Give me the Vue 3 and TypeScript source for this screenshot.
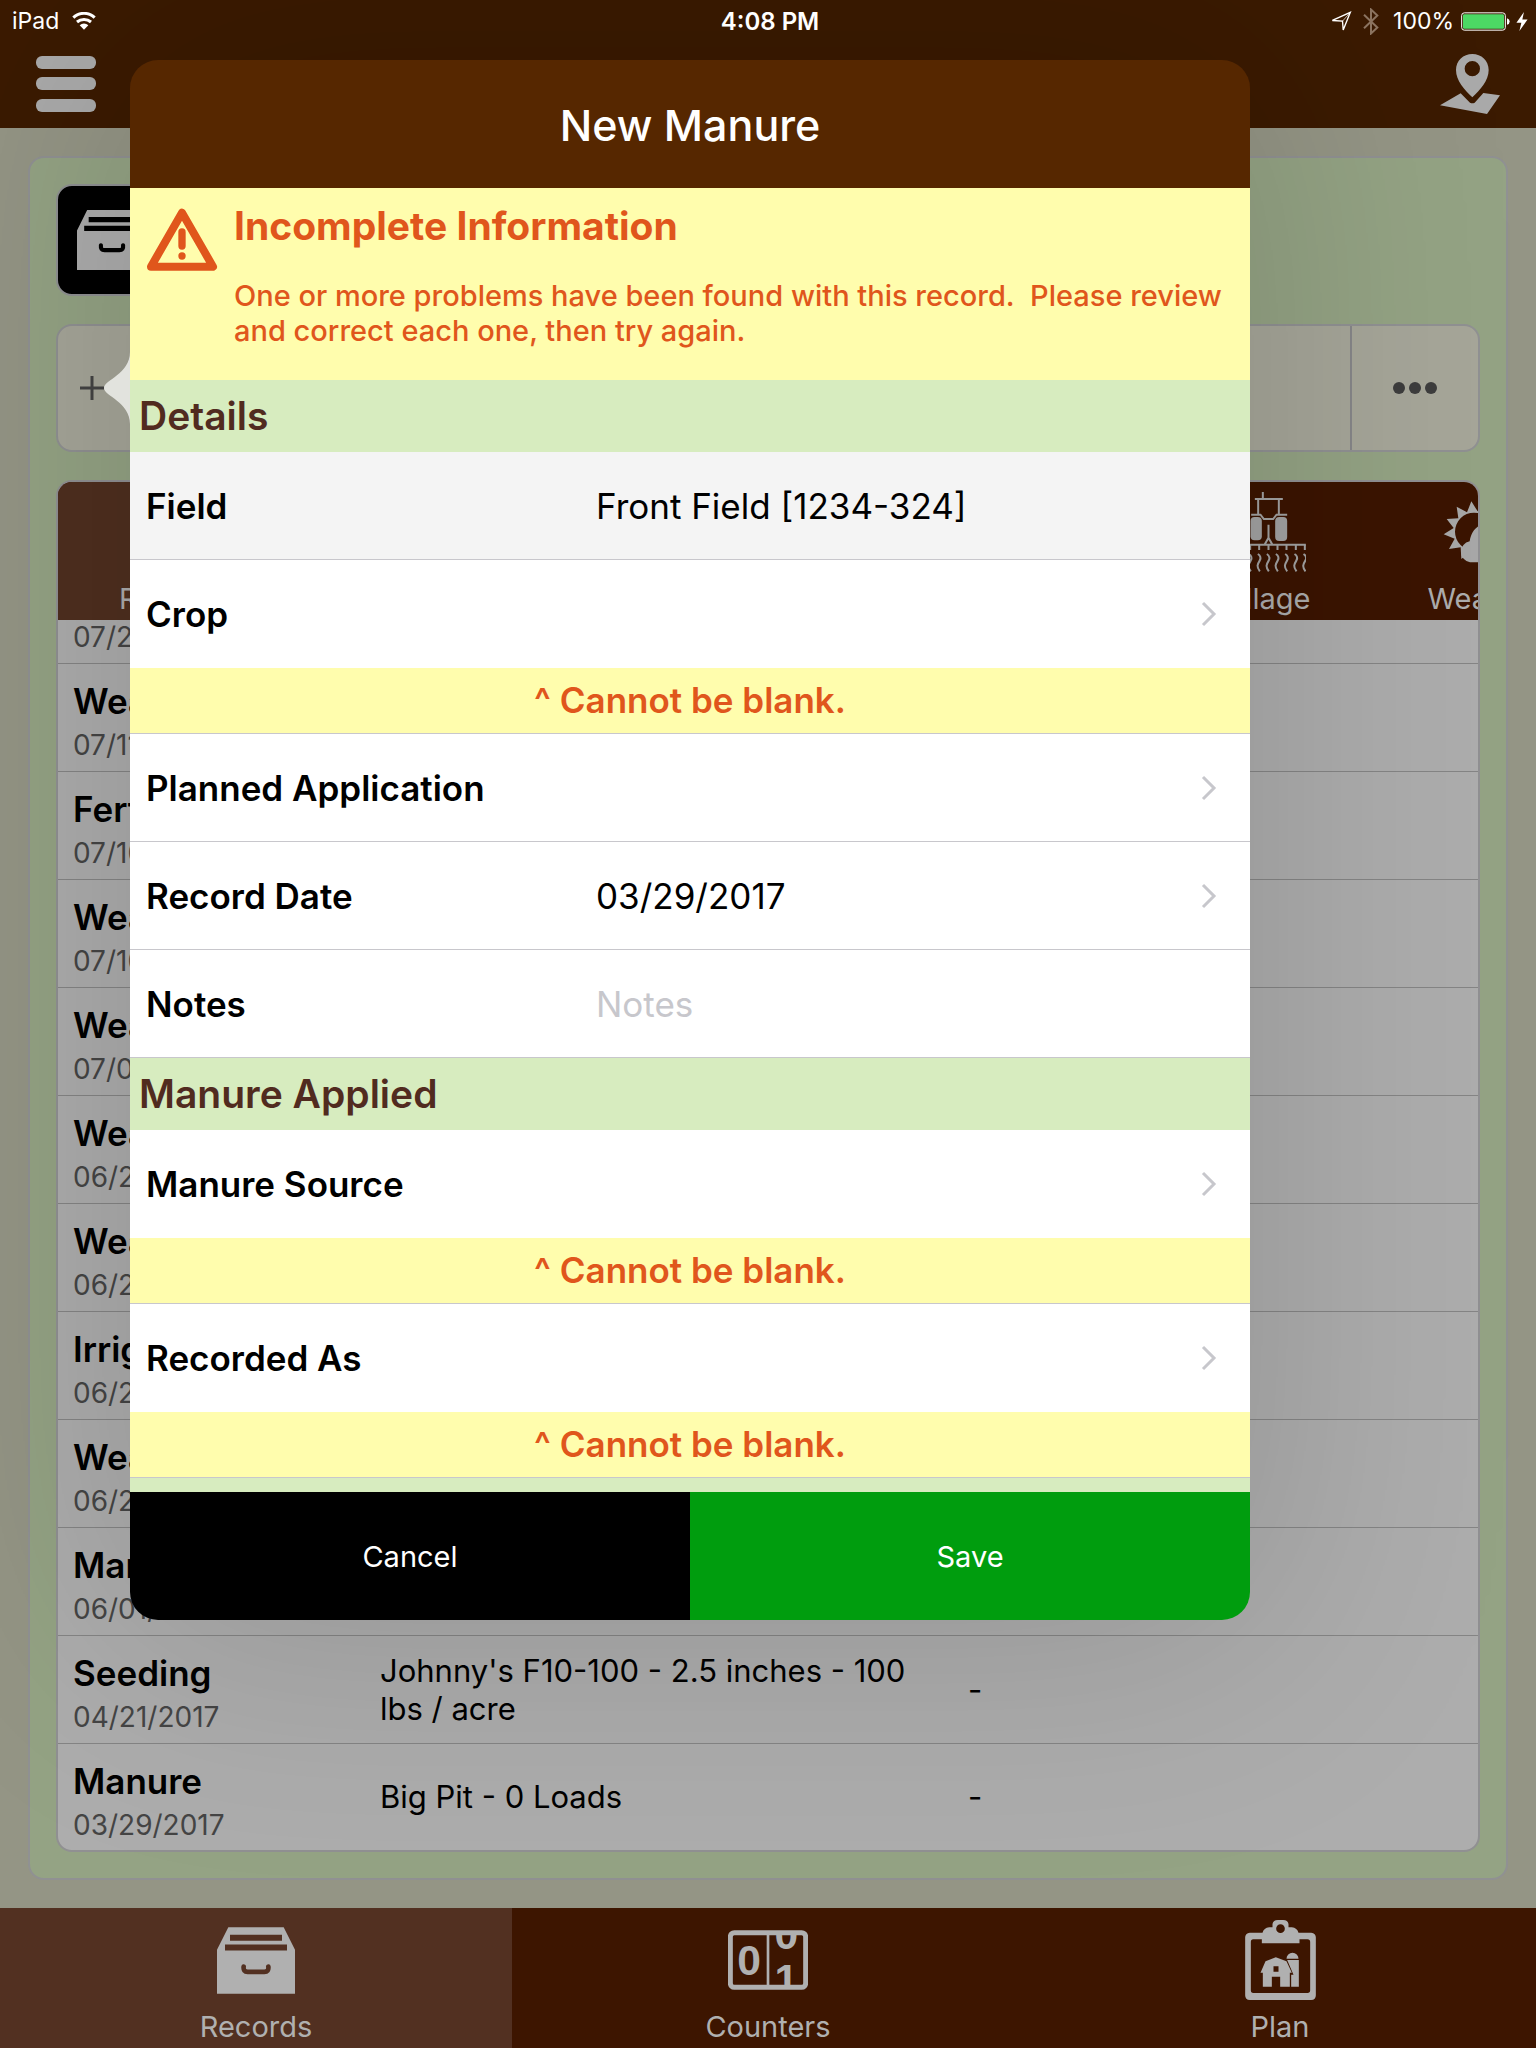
<script setup lang="ts">
import { ref } from 'vue'

interface FarmRecord {
  kind: string
  date: string
  summary?: string
  amount?: string
}

interface FormRow {
  id: string
  label: string
  type: 'readonly' | 'picker' | 'text'
  value: string
  error?: string
}

interface FormSection {
  title: string
  rows: FormRow[]
}

const categories = ['Recent', 'Fertilizer', 'Irrigation', 'Manure', 'Seeding', 'Tillage', 'Weather']

const records: FarmRecord[] = [
  { kind: 'Weather', date: '07/21/2017' },
  { kind: 'Weather', date: '07/11/2017' },
  { kind: 'Fertilizer', date: '07/10/2017' },
  { kind: 'Weather', date: '07/10/2017' },
  { kind: 'Weather', date: '07/03/2017' },
  { kind: 'Weather', date: '06/29/2017' },
  { kind: 'Weather', date: '06/26/2017' },
  { kind: 'Irrigation', date: '06/23/2017' },
  { kind: 'Weather', date: '06/20/2017' },
  { kind: 'Manure', date: '06/01/2017' },
  { kind: 'Seeding', date: '04/21/2017', summary: "Johnny's F10-100 - 2.5 inches - 100 lbs / acre", amount: '-' },
  { kind: 'Manure', date: '03/29/2017', summary: 'Big Pit - 0 Loads', amount: '-' },
]

const blank = '^ Cannot be blank.'

const sections = ref<FormSection[]>([
  {
    title: 'Details',
    rows: [
      { id: 'field', label: 'Field', type: 'readonly', value: 'Front Field [1234-324]' },
      { id: 'crop', label: 'Crop', type: 'picker', value: '', error: blank },
      { id: 'planned', label: 'Planned Application', type: 'picker', value: '' },
      { id: 'date', label: 'Record Date', type: 'picker', value: '03/29/2017' },
      { id: 'notes', label: 'Notes', type: 'text', value: '' },
    ],
  },
  {
    title: 'Manure Applied',
    rows: [
      { id: 'source', label: 'Manure Source', type: 'picker', value: '', error: blank },
      { id: 'recorded', label: 'Recorded As', type: 'picker', value: '', error: blank },
    ],
  },
])

// Twelve-pointed star for the sun's rays
const sunRays = Array.from({ length: 24 }, (_, i) => {
  const angle = ((i * 15 - 95) * Math.PI) / 180
  const radius = i % 2 === 0 ? 91 : 62
  return `${Math.round(92 + radius * Math.cos(angle))} ${Math.round(92 + radius * Math.sin(angle))}`
}).join('L')
</script>

<template>
  <div class="app">
    <header class="top">
      <div class="status">
        <div class="status-left">
          <span>iPad</span>
          <svg class="wifi" viewBox="0 0 72 54" aria-hidden="true">
            <path d="M4 17A46 46 0 0 1 68 17" fill="none" stroke="#fff" stroke-width="9" />
            <path d="M15 30A32 32 0 0 1 57 30" fill="none" stroke="#fff" stroke-width="9" />
            <path d="M36 53L23 40A19 19 0 0 1 49 40Z" fill="#fff" />
          </svg>
        </div>
        <span class="clock">4:08 PM</span>
        <div class="status-right">
          <svg class="locate" viewBox="0 0 62 62" aria-hidden="true">
            <path d="M4 28L57 4L36 56L34 30Z" fill="none" stroke="#fff" stroke-width="4" />
            <path d="M34 30L57 4" stroke="#fff" stroke-width="2" />
          </svg>
          <svg class="bluetooth" viewBox="0 0 48 80" aria-hidden="true">
            <path d="M3 20L43 58L24 76V4L43 22L3 60" fill="none" stroke="#8b735f" stroke-width="6" />
          </svg>
          <span>100%</span>
          <svg class="battery" viewBox="0 0 147 56" aria-hidden="true">
            <rect x="2" y="2" width="131" height="52" rx="8" fill="none" stroke="#fff" stroke-width="3" />
            <rect x="6" y="6" width="123" height="44" rx="4" fill="#4cd964" />
            <path d="M138 18Q146 20 146 28T138 38Z" fill="#fff" />
          </svg>
          <svg class="bolt" viewBox="0 0 36 58" aria-hidden="true">
            <path d="M24 0L1 33H16L10 58L35 23H19Z" fill="#fff" />
          </svg>
        </div>
      </div>
      <div class="nav">
        <button class="icon-button" aria-label="Menu">
          <svg class="menu" viewBox="0 0 60 56">
            <rect width="60" height="13" rx="6" />
            <rect y="21" width="60" height="13" rx="6" />
            <rect y="43" width="60" height="13" rx="6" />
          </svg>
        </button>
        <button class="icon-button" aria-label="Map">
          <svg class="map" viewBox="0 0 180 180">
            <path
              fill-rule="evenodd"
              d="M97 0C70 0 48 20 48 48C48 80 74 108 97 130C120 108 146 80 146 48C146 20 124 0 97 0ZM97 21A23 23 0 1 1 97 67A23 23 0 1 1 97 21Z"
            />
            <path d="M0 154L62 118L90 146Q97 150 104 146L130 117L180 124L141 180Z" />
          </svg>
        </button>
      </div>
    </header>

    <main class="content">
      <section class="panel">
        <button class="tile" aria-label="Records">
          <svg class="drawer" viewBox="0 0 234 200">
            <path
              fill-rule="evenodd"
              d="M34 0H200L234 68V200H0V68ZM39 23V41H195V23ZM24 52V70H210V52Z"
            />
            <path d="M80 118Q78 134 92 134H142Q156 134 154 118" fill="none" stroke="#000" stroke-width="14" stroke-linecap="round" />
          </svg>
        </button>

        <div class="toolbar">
          <button class="tool add" aria-label="Add record">
            <svg viewBox="0 0 24 24"><path d="M0 12H24M12 0V24" stroke="#444" stroke-width="3" /></svg>
          </button>
          <span class="tool-space"></span>
          <button class="tool more" aria-label="More">
            <svg viewBox="0 0 44 12" fill="#3d3d3d">
              <circle cx="6" cy="6" r="6" /><circle cx="22" cy="6" r="6" /><circle cx="38" cy="6" r="6" />
            </svg>
          </button>
        </div>

        <div class="card">
          <nav class="categories">
            <button v-for="(name, i) in categories" :key="name" class="category" :class="{ chosen: i === 0 }">
              <span class="category-icon">
                <svg v-if="name === 'Tillage'" class="tillage" viewBox="-18 0 242 246" fill="none" stroke="#a3a3a3" stroke-width="6">
                  <path d="M95 3V24M71 24H155M81 24V70M143 24V70M60 71H88L98 84H126L136 71H168" />
                  <rect x="58" y="78" width="34" height="70" rx="12" fill="#a3a3a3" stroke="none" />
                  <rect x="132" y="78" width="36" height="72" rx="12" fill="#a3a3a3" stroke="none" />
                  <path d="M112 101V140L101 160M112 140L123 160M0 161H224" />
                  <path d="M3 161V177M30 161V177M57 161V177M84 161V177M112 161V177M139 161V177M166 161V177M194 161V177M221 161V177" />
                  <path
                    v-for="x in [3, 30, 57, 84, 111, 138, 166, 194, 221]"
                    :key="x"
                    :transform="`translate(${x} 0)`"
                    d="M-4 189C4 194 6 200 2 208C-5 220 -9 226 2 241"
                  />
                </svg>
                <svg v-if="name === 'Weather'" class="weather" viewBox="0 0 250 186" fill="#a8a8a8">
                  <path fill-rule="evenodd" :d="`M${sunRays}ZM92 35A57 57 0 1 0 92 149A57 57 0 1 0 92 35Z`" />
                  <path
                    d="M79 121C85 82 112 66 140 66C175 66 196 90 198 118C230 116 248 132 248 152C248 172 232 184 214 184H80A32 32 0 0 1 79 121Z"
                  />
                </svg>
              </span>
              <span>{{ name }}</span>
            </button>
          </nav>
          <div class="records">
            <table>
              <tbody>
                <tr v-for="(r, i) in records" :key="i">
                  <td class="what">
                    <strong>{{ r.kind }}</strong>
                    <time>{{ r.date }}</time>
                  </td>
                  <td class="summary"><p>{{ r.summary }}</p></td>
                  <td class="amount">{{ r.amount }}</td>
                </tr>
              </tbody>
            </table>
          </div>
        </div>
      </section>
    </main>

    <nav class="tabs">
      <a href="#records" class="tab chosen">
        <span class="tab-icon">
          <svg width="78" height="67" viewBox="0 0 234 200">
            <path
              fill-rule="evenodd"
              d="M34 0H200L234 68V200H0V68ZM39 23V41H195V23ZM24 52V70H210V52Z"
            />
            <path d="M80 118Q78 134 92 134H142Q156 134 154 118" fill="none" stroke="#523021" stroke-width="14" stroke-linecap="round" />
          </svg>
        </span>
        Records
      </a>
      <a href="#counters" class="tab">
        <span class="tab-icon">
          <svg width="80" height="60" viewBox="0 0 240 178">
            <clipPath id="reel"><rect x="125" y="14" width="98" height="150" /></clipPath>
            <rect x="7" y="7" width="226" height="164" rx="12" fill="none" stroke="#b0b0b0" stroke-width="15" />
            <path d="M120 10V170" stroke="#b0b0b0" stroke-width="8" />
            <g font-family="Liberation Sans, sans-serif" font-weight="700" font-size="128" text-anchor="middle">
              <text x="63" y="134">0</text>
              <g clip-path="url(#reel)">
                <text x="175" y="56">0</text>
                <text x="175" y="190">1</text>
              </g>
            </g>
          </svg>
        </span>
        Counters
      </a>
      <a href="#plan" class="tab">
        <span class="tab-icon">
          <svg width="71" height="80" viewBox="0 0 212 240">
            <path
              fill-rule="evenodd"
              d="M14 38H52Q56 24 72 22H82V12Q84 0 98 0H114Q128 0 130 12V22H140Q156 24 160 38H198Q212 40 212 52V226Q212 240 198 240H14Q0 240 0 226V52Q0 40 14 38ZM50 58H24Q17 58 17 66V211Q17 219 24 219H187Q195 219 195 211V66Q195 58 187 58H163V70H50ZM106 13A13 13 0 1 0 106 39A13 13 0 1 0 106 13Z"
            />
            <path
              fill-rule="evenodd"
              d="M61 124L92 112L124 124L140 158H134V200H105V170H80V200H53V158H46ZM85 139V155H100V139Z"
            />
            <path d="M124 116A18 18 0 0 1 160 116ZM126 120H161V200H138V164H145Z" />
          </svg>
        </span>
        Plan
      </a>
    </nav>

    <div class="dialog" role="dialog" aria-labelledby="dialog-title">
      <svg class="pointer" viewBox="0 0 26 72" aria-hidden="true">
        <path d="M26 0C26 22 0 28 0 36C0 44 26 50 26 72Z" fill="#e2e3de" />
      </svg>
      <form class="sheet" @submit.prevent>
        <h1 id="dialog-title">New Manure</h1>
        <div class="body">
          <div class="alert" role="alert">
            <svg class="warning" viewBox="0 0 212 192" aria-hidden="true">
              <path d="M106 14L199 176H13Z" fill="none" stroke="#e0561c" stroke-width="24" stroke-linejoin="round" />
              <path d="M106 72V114" stroke="#e0561c" stroke-width="22" stroke-linecap="round" />
              <circle cx="106" cy="144" r="11" fill="#e0561c" />
            </svg>
            <div>
              <h2>Incomplete Information</h2>
              <p>One or more problems have been found with this record.&nbsp; Please review and correct each one, then try again.</p>
            </div>
          </div>
          <template v-for="s in sections" :key="s.title">
            <h3>{{ s.title }}</h3>
            <template v-for="row in s.rows" :key="row.id">
              <div class="row" :class="{ locked: row.type === 'readonly', invalid: row.error }">
                <label :for="row.id">{{ row.label }}</label>
                <button v-if="row.type === 'picker'" :id="row.id" type="button" class="control">
                  <span>{{ row.value }}</span>
                  <svg class="chevron" viewBox="0 0 16 26" aria-hidden="true">
                    <path d="M2 2L13 13L2 24" fill="none" stroke="#c7c7cc" stroke-width="3" />
                  </svg>
                </button>
                <input
                  v-else
                  :id="row.id"
                  v-model="row.value"
                  type="text"
                  class="control"
                  :readonly="row.type === 'readonly'"
                  :placeholder="row.label"
                />
              </div>
              <p v-if="row.error" class="error">{{ row.error }}</p>
            </template>
          </template>
          <div class="next-section"></div>
        </div>
        <footer>
          <button type="button" class="cancel">Cancel</button>
          <button type="submit" class="save">Save</button>
        </footer>
      </form>
    </div>
  </div>
</template>

<style>
body {
  margin: 0;
}
</style>

<style scoped>
* {
  box-sizing: border-box;
}
h1,
h2,
h3,
p {
  margin: 0;
}
button,
input {
  border: 0;
  padding: 0;
  background: none;
  color: inherit;
  font: inherit;
}
svg {
  display: block;
  flex: none;
}
.app {
  position: relative;
  display: flex;
  flex-direction: column;
  height: 100vh;
  overflow: hidden;
  background: #949585;
  font-family: Inter, 'Liberation Sans', sans-serif;
}
.top {
  flex: none;
  height: 128px;
  background: #3b1a00;
}
.status {
  position: relative;
  z-index: 2;
  display: grid;
  grid-template-columns: 1fr auto 1fr;
  align-items: center;
  height: 42px;
  padding: 0 8px 0 12px;
  color: #fff;
  font-size: 23px;
}
.status-left,
.status-right {
  display: flex;
  align-items: center;
}
.status-left {
  gap: 13px;
}
.status-right {
  justify-content: flex-end;
}
.clock {
  font-size: 24px;
  font-weight: 600;
}
.wifi {
  width: 24px;
  height: 18px;
}
.locate {
  width: 21px;
  height: 21px;
  margin-right: 11px;
}
.bluetooth {
  width: 16px;
  height: 27px;
  margin-right: 14px;
}
.battery {
  width: 49px;
  height: 19px;
  margin: 0 6px 0 7px;
}
.bolt {
  width: 12px;
  height: 19px;
}
.nav {
  display: flex;
  justify-content: space-between;
  align-items: center;
  height: 86px;
  padding: 0 36px 2px;
}
.icon-button {
  fill: #aaa;
}
.menu {
  width: 60px;
  height: 56px;
}
.map {
  width: 60px;
  height: 60px;
}
.content {
  flex: 1;
  display: flex;
  min-height: 0;
  padding: 28px;
}
.panel {
  flex: 1;
  display: flex;
  flex-direction: column;
  gap: 28px;
  min-width: 0;
  padding: 26px;
  border: 2px solid #909192;
  border-radius: 16px;
  background: #94a384;
}
.tile {
  flex: none;
  display: grid;
  place-items: center;
  width: 112px;
  height: 112px;
  border: 2px solid #8f9092;
  border-radius: 16px;
  background: #000;
  fill: #adadad;
}
.drawer {
  width: 70px;
  height: 60px;
}
.toolbar {
  flex: none;
  display: flex;
  height: 128px;
  border: 2px solid #909192;
  border-radius: 16px;
  background: #a6a699;
}
.tool {
  display: grid;
  place-items: center;
}
.add {
  width: 68px;
}
.add svg {
  width: 24px;
  height: 24px;
}
.tool-space {
  flex: 1;
}
.more {
  width: 128px;
  border-left: 2px solid #868688;
}
.more svg {
  width: 44px;
  height: 12px;
}
.card {
  flex: 1;
  display: flex;
  flex-direction: column;
  min-height: 0;
  overflow: hidden;
  border: 2px solid #909092;
  border-radius: 16px;
  background: #adadad;
}
.categories {
  flex: none;
  display: flex;
  height: 138px;
  overflow: hidden;
  background: #3b1400;
}
.category {
  flex: 0 0 220px;
  display: flex;
  flex-direction: column;
  align-items: center;
  padding-top: 9px;
  color: #adadad;
  font-size: 29px;
  line-height: 36px;
}
.category.chosen {
  flex-basis: 217px;
  background: #4f2f1f;
}
.category-icon {
  display: grid;
  place-items: center;
  height: 82px;
  margin-bottom: 8px;
}
.tillage {
  width: 81px;
  height: 82px;
}
.weather {
  width: 84px;
  height: 62px;
}
.records {
  flex: 1;
  display: flex;
  flex-direction: column;
  justify-content: flex-end;
  min-height: 0;
  overflow: hidden;
}
table {
  flex: none;
  width: 100%;
  border-spacing: 0;
  table-layout: fixed;
}
tr {
  height: 108px;
}
tr:last-child {
  height: 106px;
}
td {
  padding: 0;
  border-bottom: 1px solid #858585;
}
tr:last-child td {
  border-bottom: 0;
}
.what {
  width: 322px;
  padding-left: 15px;
}
.what strong,
.what time {
  display: block;
}
.what strong {
  padding-top: 11px;
  font-size: 35px;
  font-weight: 600;
  line-height: 44px;
}
.what time {
  color: #454545;
  font-size: 28px;
  line-height: 44px;
}
.summary,
.amount {
  font-size: 31px;
  line-height: 38px;
}
.summary {
  width: 588px;
}
.summary p {
  max-width: 548px;
}
.tabs {
  flex: none;
  display: flex;
  height: 140px;
  background: #3d1500;
}
.tab {
  flex: 1;
  display: flex;
  flex-direction: column;
  align-items: center;
  gap: 9px;
  padding-top: 12px;
  color: #b0b0b0;
  fill: #b0b0b0;
  font-size: 29px;
  line-height: 36px;
  text-decoration: none;
}
.tab.chosen {
  background: #523021;
}
.tab-icon {
  display: grid;
  place-items: center;
  height: 80px;
}
.dialog {
  position: absolute;
  top: 60px;
  left: 130px;
  right: 286px;
  display: flex;
  max-height: min(1560px, calc(100% - 120px));
  border-radius: 28px;
  box-shadow: 0 0 260px 20px rgba(0, 0, 0, 0.15);
}
.pointer {
  position: absolute;
  top: 292px;
  left: -26px;
  width: 26px;
  height: 72px;
}
.sheet {
  flex: 1;
  display: flex;
  flex-direction: column;
  min-width: 0;
  overflow: hidden;
  border-radius: 28px;
}
h1 {
  flex: none;
  height: 128px;
  background: #562700;
  color: #fff;
  font-size: 43px;
  font-weight: 500;
  line-height: 130px;
  text-align: center;
}
.body {
  flex: 1 1 auto;
  min-height: 0;
  overflow: hidden;
  background: #fff;
}
.alert {
  display: flex;
  gap: 16px;
  height: 192px;
  padding: 13px 0 0 16px;
  background: #fffdad;
  color: #e0561c;
}
.warning {
  width: 72px;
  height: 64px;
  margin-top: 7px;
}
h2 {
  margin-bottom: 27px;
  font-size: 39px;
  font-weight: 700;
  line-height: 50px;
}
.alert p {
  font-size: 29px;
  font-weight: 500;
  line-height: 35px;
}
h3 {
  padding-left: 9px;
  background: #d7ecbf;
  color: #512b1f;
  font-size: 39px;
  font-weight: 600;
  line-height: 72px;
}
.row {
  display: flex;
  height: 108px;
  padding-left: 16px;
  border-bottom: 1px solid #c8c7cc;
}
.row.locked {
  background: #f4f4f4;
}
.row.invalid {
  border-bottom: 0;
}
label {
  display: flex;
  align-items: center;
  width: 450px;
  font-size: 35px;
  font-weight: 600;
}
.control {
  flex: 1;
  display: flex;
  align-items: center;
  justify-content: space-between;
  min-width: 0;
  padding-right: 33px;
  outline: 0;
  font-size: 35px;
  text-align: left;
}
.control::placeholder {
  color: #c7c7cc;
  opacity: 1;
}
.chevron {
  width: 16px;
  height: 26px;
}
.error {
  height: 66px;
  border-bottom: 1px solid #c8c7cc;
  background: #fffdad;
  color: #e0561c;
  font-size: 35px;
  font-weight: 600;
  line-height: 64px;
  text-align: center;
}
.next-section {
  height: 72px;
  background: #d7ecbf;
}
footer {
  flex: none;
  display: flex;
  height: 128px;
  color: #fff;
  font-size: 29px;
}
footer button {
  flex: 1;
}
.cancel {
  background: #000;
}
.save {
  background: #009d0e;
}
</style>
